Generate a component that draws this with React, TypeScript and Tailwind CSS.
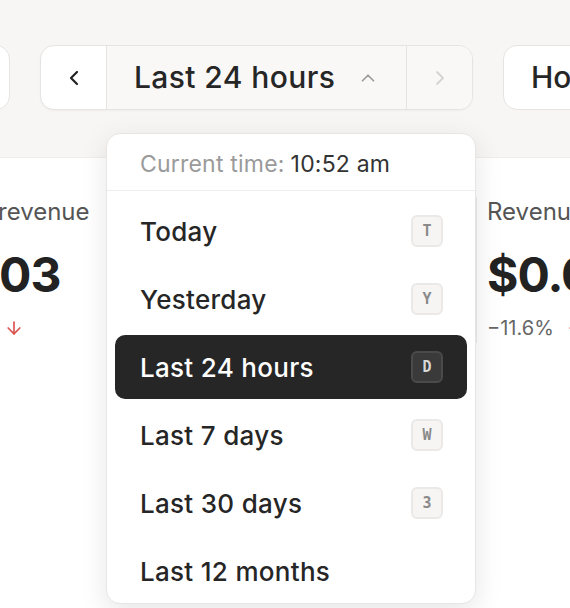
import { ChevronLeft, ChevronRight, ChevronUp, ArrowDown } from 'lucide-react'

const options = [
  { label: 'Today', key: 'T' },
  { label: 'Yesterday', key: 'Y' },
  { label: 'Last 24 hours', key: 'D', active: true },
  { label: 'Last 7 days', key: 'W' },
  { label: 'Last 30 days', key: '3' },
  { label: 'Last 12 months' },
]

function Kbd({ k, active }: { k: string; active?: boolean }) {
  return (
    <span
      className={
        'flex h-[32px] w-[32px] items-center justify-center rounded-[6px] border-2 font-["DejaVu_Sans_Mono",monospace] text-[15px] font-bold ' +
        (active ? 'border-[#4a4a4a] bg-[#3a3a3a] text-[#d8d8d8]' : 'border-[#ebe9e7] bg-[#f6f5f4] text-[#8a8a8a]')
      }
    >
      {k}
    </span>
  )
}

function StatCard({ label, value, change }: { label: string; value: string; change: string }) {
  return (
    <div className="flex flex-col whitespace-nowrap">
      <div className="text-[24px] leading-[30px] text-[#555]">{label}</div>
      <div className="mt-[24px] text-[48px] font-bold leading-none tracking-[-1px] text-[#222]">{value}</div>
      <div className="mt-[14px] flex items-center gap-[12px] text-[20px] text-[#666]">
        <span>{change}</span>
        <ArrowDown className="h-[20px] w-[20px] text-[#d9534f]" strokeWidth={2} />
      </div>
    </div>
  )
}

export default function App() {
  return (
    <div className="relative h-[608px] w-[570px] overflow-hidden bg-white font-['Inter',sans-serif] text-[#262626]">
      {/* toolbar */}
      <div className="flex h-[158px] items-start gap-[30px] border-b border-[#efedeb] bg-[#f7f6f5] pt-[45px]">
        <div className="ml-[-60px] h-[65px] w-[70px] shrink-0 rounded-[14px] border border-[#e6e4e2] bg-white" />
        <div className="flex h-[65px] w-[433px] shrink-0 overflow-hidden rounded-[14px] border border-[#e6e4e2] bg-white shadow-[0_1px_2px_rgba(0,0,0,0.04)]">
          <div className="flex w-[66px] items-center justify-center border-r border-[#e6e4e2]">
            <ChevronLeft className="h-[24px] w-[24px] text-[#222]" strokeWidth={2.2} />
          </div>
          <div className="flex flex-1 items-center gap-[22px] bg-[#f9f8f7] pl-[27px]">
            <span className="text-[30px] font-medium tracking-[0.4px]">Last 24 hours</span>
            <ChevronUp className="h-[22px] w-[22px] text-[#999]" strokeWidth={1.8} />
          </div>
          <div className="flex w-[66px] items-center justify-center border-l border-[#e6e4e2] bg-[#f9f8f7]">
            <ChevronRight className="h-[24px] w-[24px] text-[#d6d4d2]" strokeWidth={1.8} />
          </div>
        </div>
        <div className="flex h-[65px] w-[120px] shrink-0 items-center rounded-[14px] border border-[#e6e4e2] bg-white pl-[27px] text-[30px] font-medium">
          Ho
        </div>
      </div>

      {/* stats */}
      <div className="flex pt-[39px]">
        <div className="ml-[-75px] w-[551px] shrink-0">
          <StatCard label="Gross revenue" value="$0.03" change="−11.6%" />
        </div>
        <div className="shrink-0 border-l border-[#ecebe9] pl-[10px]">
          <StatCard label="Revenue" value="$0.03" change="−11.6%" />
        </div>
      </div>

      {/* dropdown */}
      <div className="absolute left-[106px] top-[133px] w-[370px] rounded-[14px] border border-[#e8e6e4] bg-white shadow-[0_8px_28px_rgba(0,0,0,0.10)]">
        <div className="flex h-[57px] items-center border-b border-[#eeedeb] pl-[33px] pt-[4px] text-[23px] tracking-[0.2px]">
          <span className="text-[#9a9a9a]">Current time:</span>
          <span className="ml-[6px] text-[#333]">10:52 am</span>
        </div>
        <div className="flex flex-col gap-[4px] px-[8px] pt-[8px]">
          {options.map((o) => (
            <div
              key={o.label}
              className={
                'flex h-[64px] items-center justify-between rounded-[10px] pl-[25px] pr-[24px] ' +
                (o.active ? 'bg-[#262626] text-white' : 'text-[#262626]')
              }
            >
              <span className="text-[26px] font-medium tracking-[0.3px]">{o.label}</span>
              {o.key && <Kbd k={o.key} active={o.active} />}
            </div>
          ))}
        </div>
      </div>
    </div>
  )
}
